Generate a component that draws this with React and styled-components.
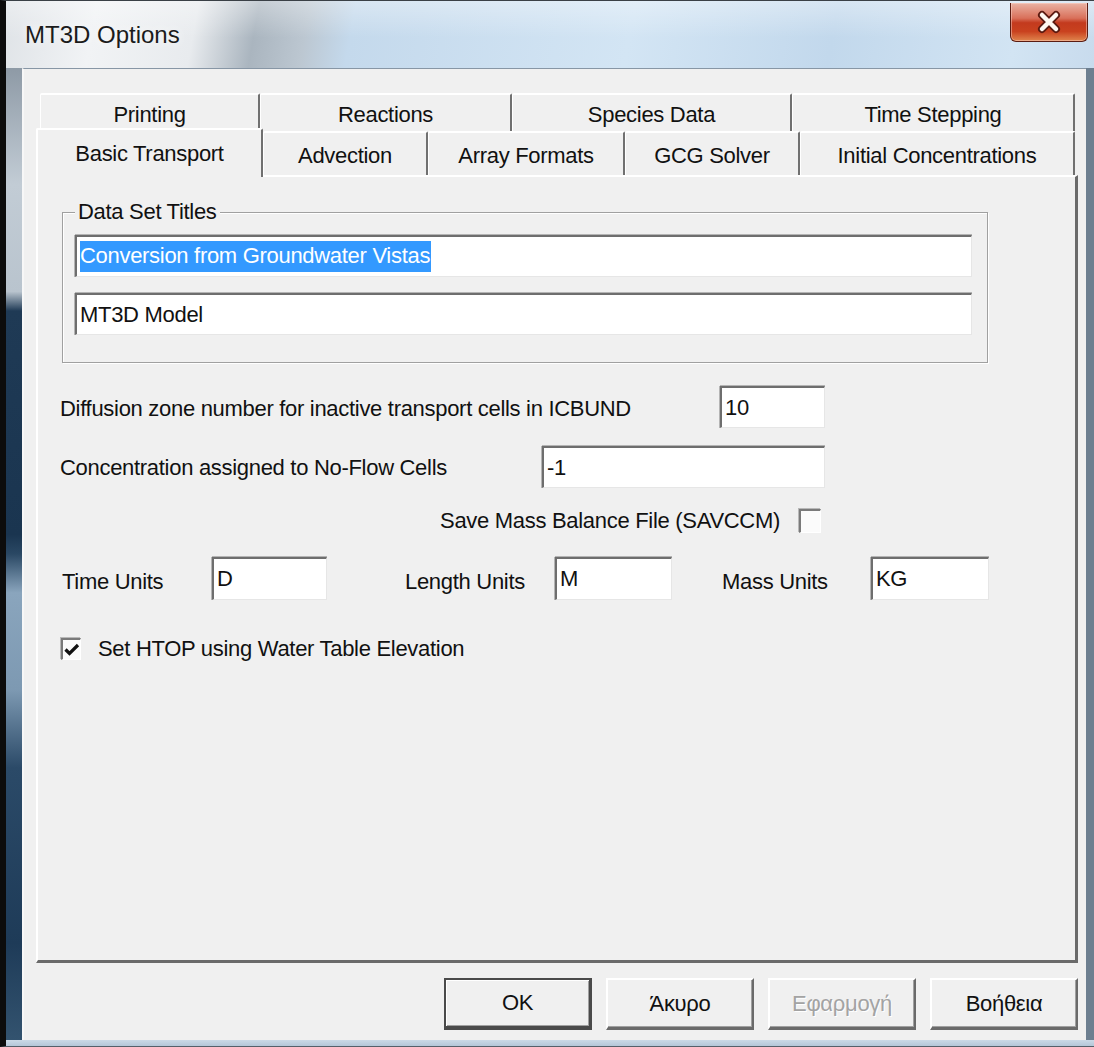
import React from 'react'
import styled, { createGlobalStyle, css } from 'styled-components'

const GlobalStyle = createGlobalStyle`
  html, body {
    margin: 0;
    padding: 0;
  }
  body {
    width: 1094px;
    height: 1047px;
    overflow: hidden;
    background: #c8d6e3;
    font-family: "Liberation Sans", Arial, sans-serif;
  }
  *, *::before, *::after {
    box-sizing: border-box;
  }
`

const Window = styled.div`
  width: 1094px;
  height: 1047px;
  display: flex;
  flex-direction: column;
  overflow: hidden;
  background: #c8d6e3;
`

// glass caption of the window
const TitleBar = styled.div`
  height: 68px;
  flex: none;
  display: flex;
  justify-content: space-between;
  align-items: flex-start;
  border-top: 1px solid #3a4046;
  border-left: 6px solid #0c0c0c;
  background:
    linear-gradient(180deg, rgba(255,255,255,0.35) 0%, rgba(255,255,255,0) 55%),
    linear-gradient(100deg, #dfe3e7 0px, #f1f3f5 90px, #e8ebee 190px, #aab5bf 250px, #bcc7d1 300px, #c4d9ec 345px, #d3e5f4 620px, #c2d8ec 820px, #d2e4f3 1000px, #c8dbed 100%);
`

const Title = styled.div`
  margin: 20px 0 0 19px;
  font-size: 24px;
  color: #1b1b1b;
  text-shadow: 0 0 10px rgba(255,255,255,0.95);
`

const CloseButton = styled.div`
  width: 78px;
  height: 39px;
  margin: 2px 6px 0 0;
  border: 1px solid #5a1c12;
  border-top: none;
  border-radius: 0 0 6px 6px;
  background: linear-gradient(180deg, #eab3a4 0%, #d9705a 40%, #c33a1e 52%, #c9421f 75%, #e0864e 100%);
  box-shadow: inset 0 0 0 1px rgba(255,220,210,0.45);
  display: flex;
  align-items: center;
  justify-content: center;
`

// side edges of the window: black rim and tinted glass on the left,
// a pale rim on the right
const Body = styled.div`
  flex: 1;
  display: flex;
  min-height: 0;
  padding: 0 8px 0 16px;
  border-left: 6px solid #0c0c0c;
  background:
    linear-gradient(90deg, transparent 0 1072px, #f4f4f4 1072px 1073px, #c9d8e5 1073px 1078px, #dbe6ef 1078px 1079px, #6d7f90 1079px),
    linear-gradient(180deg,
      #8e9aa6 0%, #c2ccd5 12%, #b9c4ce 23%, #1f3a55 25%, #1a3550 48%,
      #2a4864 50%, #8aa5bd 54%, #7d99b2 64%, #2b4a68 72%, #1e3b58 90%, #33536f 100%);
`

const BottomFrame = styled.div`
  height: 7px;
  flex: none;
  border-left: 6px solid #0c0c0c;
  border-bottom: 1px solid #55606a;
  background: linear-gradient(180deg, #cbd9e6, #b5c7d8);
`

const Client = styled.div`
  flex: 1;
  display: flex;
  flex-direction: column;
  background: #f0f0f0;
  border-top: 1px solid #8796a5;
  border-left: 2px solid #f7f7f7;
  padding: 24px 8px 10px 12px;
`

const TabRow = styled.div`
  display: flex;
  flex: none;
  height: ${p => p.$h}px;
  margin: 0 3px 0 ${p => p.$left}px;
`

const Tab = styled.div`
  width: ${p => p.$w}px;
  flex: none;
  display: flex;
  align-items: center;
  justify-content: center;
  padding-top: 4px;
  font-size: 22px;
  letter-spacing: -0.3px;
  color: #111;
  white-space: nowrap;
  background: #f0f0f0;
  border-top: 2px solid #fff;
  border-left: 1px solid #fff;
  border-right: 2px solid #707070;
  border-radius: 2px 2px 0 0;
  ${p => p.$active && css`
    margin-top: -3px;
    height: calc(100% + 5px);
    padding-top: 0;
    border-left: 2px solid #fff;
    z-index: 1;
  `}
`

const Panel = styled.div`
  height: 788px;
  flex: none;
  display: flex;
  flex-direction: column;
  align-items: flex-start;
  padding-left: 22px;
  background: #f0f0f0;
  border-top: 2px solid #fff;
  border-left: 2px solid #fff;
  border-right: 3px solid #6a6a6a;
  border-bottom: 3px solid #6a6a6a;
`

const GroupBox = styled.div`
  position: relative;
  width: 926px;
  height: 151px;
  margin: 35px 0 0 2px;
  padding: 22px 0 0 12px;
  display: flex;
  flex-direction: column;
  gap: 16px;
  border: 1px solid #a0a0a0;
  box-shadow: inset 1px 1px 0 #fff, 1px 1px 0 #fff;
`

const Legend = styled.span`
  position: absolute;
  top: -14px;
  left: 12px;
  padding: 0 3px;
  background: #f0f0f0;
  font-size: 22px;
  letter-spacing: -0.3px;
  color: #111;
`

const Field = styled.div`
  width: ${p => p.$w}px;
  height: ${p => p.$h || 42}px;
  flex: none;
  display: flex;
  align-items: center;
  padding-left: 3px;
  background: #fff;
  border-top: 2px solid #6e6e6e;
  border-left: 2px solid #6e6e6e;
  border-right: 1px solid #e6e6e6;
  border-bottom: 1px solid #e6e6e6;
  box-shadow: 0 -1px 0 #b4b4b4, -1px 0 0 #b4b4b4;
  font-size: 22px;
  letter-spacing: -0.3px;
  color: #111;
  white-space: nowrap;
`

const Selected = styled.span`
  background: #3399ff;
  color: #fff;
  padding: 2px 1px 3px 0;
`

const Label = styled.span`
  font-size: 22px;
  letter-spacing: -0.3px;
  color: #111;
  white-space: nowrap;
  margin-top: ${p => p.$drop || 0}px;
`

const Row = styled.div`
  width: 765px;
  height: ${p => p.$h}px;
  margin-top: ${p => p.$top}px;
  display: flex;
  align-items: center;
  justify-content: ${p => p.$end ? 'flex-end' : 'space-between'};
  gap: 19px;
  padding-right: ${p => p.$end ? 4 : 0}px;
`

const UnitsRow = styled.div`
  margin: 24px 0 0 2px;
  height: 43px;
  display: grid;
  grid-template-columns: 150px 115px 78px 150px 117px 50px 149px 118px;
  align-items: center;
`

const CheckRow = styled.div`
  margin: 36px 0 0 1px;
  display: flex;
  align-items: center;
  gap: 17px;
`

const CheckBox = styled.div`
  width: ${p => p.$w}px;
  height: ${p => p.$h}px;
  flex: none;
  display: flex;
  align-items: center;
  justify-content: center;
  background: #fbfbfb;
  border-top: 2px solid #7a7a7a;
  border-left: 2px solid #7a7a7a;
  border-right: 1px solid #fff;
  border-bottom: 1px solid #fff;
  box-shadow: -1px -1px 0 #b8b8b8;
`

const ButtonBar = styled.div`
  margin-top: 15px;
  display: flex;
  justify-content: flex-end;
  gap: 14px;
`

const Button = styled.div`
  width: 148px;
  height: 52px;
  display: flex;
  align-items: center;
  justify-content: center;
  font-size: 22px;
  letter-spacing: -0.3px;
  color: ${p => p.$disabled ? '#a3a3a3' : '#111'};
  text-shadow: ${p => p.$disabled ? '1px 1px 0 #fff' : 'none'};
  background: #f0f0f0;
  border-top: 2px solid #fff;
  border-left: 2px solid #fff;
  border-right: 2px solid #6a6a6a;
  border-bottom: 3px solid #6a6a6a;
  box-shadow: inset -1px -1px 0 #a0a0a0;
  ${p => p.$primary && css`
    border: 2px solid #4a4a4a;
    border-right-width: 3px;
    border-bottom-width: 4px;
    box-shadow: inset 1px 1px 0 #fff, inset -1px -1px 0 #a0a0a0;
  `}
`

const backTabs = [
  ['Printing', 220],
  ['Reactions', 252],
  ['Species Data', 280],
  ['Time Stepping', 283],
]

const frontTabs = [
  ['Basic Transport', 227],
  ['Advection', 165],
  ['Array Formats', 197],
  ['GCG Solver', 175],
  ['Initial Concentrations', 275],
]

const CloseGlyph = () => (
  <svg width="28" height="24" viewBox="0 0 28 24">
    <path d="M7 5 L21 19 M21 5 L7 19" stroke="#5b1a10" strokeWidth="8" strokeLinecap="round" />
    <path d="M7 5 L21 19 M21 5 L7 19" stroke="#fff8f0" strokeWidth="4.5" strokeLinecap="round" />
  </svg>
)

const Tick = () => (
  <svg width="16" height="16" viewBox="0 0 16 16">
    <path d="M1.5 7.5 L5.5 11.5 L14 3" fill="none" stroke="#111" strokeWidth="3.2" />
  </svg>
)

export default function App() {
  return (
    <Window>
      <GlobalStyle />
      <TitleBar>
        <Title>MT3D Options</Title>
        <CloseButton><CloseGlyph /></CloseButton>
      </TitleBar>
      <Body>
        <Client>
          <TabRow $h={38} $left={4}>
            {backTabs.map(([name, w]) => <Tab key={name} $w={w}>{name}</Tab>)}
          </TabRow>
          <TabRow $h={44} $left={0}>
            {frontTabs.map(([name, w], i) => (
              <Tab key={name} $w={w} $active={i === 0}>{name}</Tab>
            ))}
          </TabRow>
          <Panel>
            <GroupBox>
              <Legend>Data Set Titles</Legend>
              <Field $w={897}><Selected>Conversion from Groundwater Vistas</Selected></Field>
              <Field $w={897}>MT3D Model</Field>
            </GroupBox>

            <Row $h={42} $top={23}>
              <Label $drop={4}>Diffusion zone number for inactive transport cells in ICBUND</Label>
              <Field $w={105}>10</Field>
            </Row>
            <Row $h={42} $top={18}>
              <Label $drop={2}>Concentration assigned to No-Flow Cells</Label>
              <Field $w={283}>-1</Field>
            </Row>
            <Row $h={24} $top={21} $end>
              <Label>Save Mass Balance File (SAVCCM)</Label>
              <CheckBox $w={22} $h={24} />
            </Row>

            <UnitsRow>
              <Label $drop={6}>Time Units</Label>
              <Field $w={115} $h={43}>D</Field>
              <span />
              <Label $drop={6}>Length Units</Label>
              <Field $w={117} $h={43}>M</Field>
              <span />
              <Label $drop={6}>Mass Units</Label>
              <Field $w={118} $h={43}>KG</Field>
            </UnitsRow>

            <CheckRow>
              <CheckBox $w={20} $h={22}><Tick /></CheckBox>
              <Label>Set HTOP using Water Table Elevation</Label>
            </CheckRow>
          </Panel>
          <ButtonBar>
            <Button $primary>OK</Button>
            <Button>Άκυρο</Button>
            <Button $disabled>Εφαρμογή</Button>
            <Button>Βοήθεια</Button>
          </ButtonBar>
        </Client>
      </Body>
      <BottomFrame />
    </Window>
  )
}
